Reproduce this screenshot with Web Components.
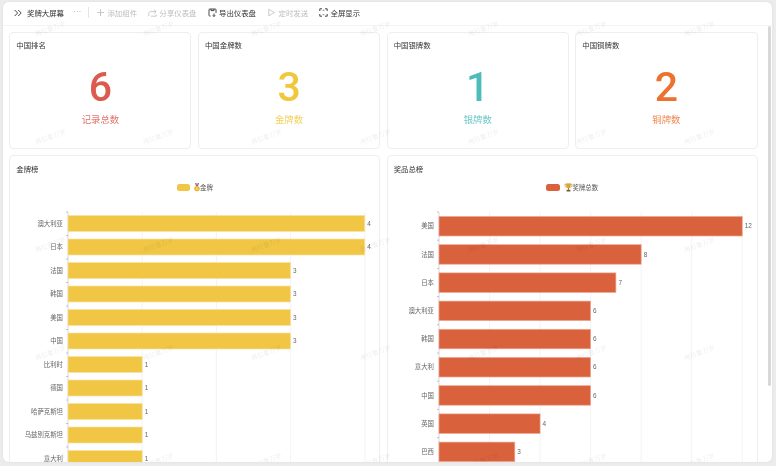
<!DOCTYPE html>
<html lang="zh">
<head>
<meta charset="utf-8">
<title>奖牌大屏幕</title>
<style>
    html, body { margin: 0; height: 100%; overflow: hidden; }
    body {
        background: #ececec;
        font-family: "Liberation Sans", "Noto Sans CJK SC", sans-serif;
        color: #333;
    }
</style>
</head>
<body>
<medal-board>
    <medal-toolbar slot="toolbar">
        <span slot="title">奖牌大屏幕</span>
        <tool-item disabled>
            <svg slot="icon" width="9" height="9" viewBox="0 0 9 9" fill="none" stroke="currentColor"><path d="M4.5 1v7M1 4.5h7" stroke-width=".8"/></svg>
            添加组件
        </tool-item>
        <tool-item disabled>
            <svg slot="icon" width="9" height="9" viewBox="0 0 9 9" fill="none" stroke="currentColor" stroke-width=".8"><path d="M.8 8.2V5.6c0-1.2.9-2 2-2H8M6 1.6l2.1 2L6 5.600M8.200 6.400v1.800H3"/></svg>
            分享仪表盘
        </tool-item>
        <tool-item>
            <svg slot="icon" width="9" height="9" viewBox="0 0 9 9" fill="none" stroke="currentColor" stroke-width=".9"><path d="M2.500 8H1.700a.7.7 0 0 1-.7-.7V1.700A.7.7 0 0 1 1.700 1h5.600a.7.700 0 0 1 .7.7v3.300M3 1v1.600h3V1M6 5.500V8.500M4.800 7.300 6 8.500l1.200-1.200"/></svg>
            导出仪表盘
        </tool-item>
        <tool-item disabled>
            <svg slot="icon" width="9" height="9" viewBox="0 0 9 9" fill="none" stroke="currentColor" stroke-width=".8"><path d="M1.800 1.200v6.600l5.600-3.300z" stroke-linejoin="round"/></svg>
            定时发送
        </tool-item>
        <tool-item>
            <svg slot="icon" width="9" height="9" viewBox="0 0 9 9" fill="none" stroke="currentColor" stroke-width=".9"><path d="M.8 3V.8H3M6 .8h2.200V3M8.200 6v2.200H6M3 8.200H.8V6"/><path d="M3.600 2.300h1.800M3.600 6.700h1.800" stroke-width=".6"/></svg>
            全屏显示
        </tool-item>
    </medal-toolbar>

    <stat-card title="中国排名" value="6" label="记录总数" color="#dc5b50"></stat-card>
    <stat-card title="中国金牌数" value="3" label="金牌数" color="#f1c83c"></stat-card>
    <stat-card title="中国银牌数" value="1" label="银牌数" color="#4fbcbc"></stat-card>
    <stat-card title="中国铜牌数" value="2" label="铜牌数" color="#ec7230"></stat-card>

    <bar-chart title="金牌榜" legend="金牌" color="#f0c644" edge="#f8e3a2"
        axis="58" unit="74.2" band="23.5" bar-top="3.500" bar-height="16" grid="1,2,3,4"
        data="澳大利亚:4,日本:4,法国:3,韩国:3,美国:3,中国:3,比利时:1,德国:1,哈萨克斯坦:1,乌兹别克斯坦:1,意大利:1">
        <svg slot="icon" width="6" height="9" viewBox="0 0 6 9">
            <path d="M1 0h1.400l.8 3H2z" fill="#d9534a"/><path d="M5 0H3.600l-.8 3H4z" fill="#4a78c8"/>
            <circle cx="3" cy="5.600" r="2.700" fill="#eda92e"/><circle cx="3" cy="5.600" r="1.500" fill="#f8d264"/>
        </svg>
    </bar-chart>
    <bar-chart title="奖品总榜" legend="奖牌总数" color="#d9613c" edge="#eea58f"
        axis="51" unit="25.27" band="28.2" bar-top="4.500" bar-height="19.500" grid="2,4,6,8,10,12"
        data="美国:12,法国:8,日本:7,澳大利亚:6,韩国:6,意大利:6,中国:6,英国:4,巴西:3">
        <svg slot="icon" width="9" height="9" viewBox="0 0 9 9">
            <path d="M1 1.200h7v1.300c0 1-.8 1.700-1.800 1.700H2.800C1.800 4.200 1 3.500 1 2.500z" fill="none" stroke="#b98a2c" stroke-width=".7"/>
            <path d="M2.300.5h4.400v2.300c0 1.400-1 2.300-2.200 2.300s-2.200-.9-2.200-2.300z" fill="#d9a62e"/>
            <path d="M4 5h1v1.800H4z" fill="#a8791f"/><path d="M2.600 6.800h3.800v1.700H2.600z" fill="#7a5a24"/>
        </svg>
    </bar-chart>
</medal-board>

<script>
class MedalBoard extends HTMLElement {
    constructor() {
        super();
        this.attachShadow({mode: "open"});
        this.shadowRoot.innerHTML = `
            <style>
                :host {
                    display: block;
                    box-sizing: border-box;
                    height: 466px;
                    padding: 2px 4px 4px 3px;
                }
                .panel {
                    position: relative;
                    height: 100%;
                    display: flex;
                    flex-direction: column;
                    background: #fff;
                    border-radius: 6px;
                    overflow: hidden;
                    box-shadow: 0 0 3px rgba(0, 0, 0, .06);
                    filter: blur(.4px);
                }
                .content {
                    flex: 1;
                    min-height: 0;
                    overflow: hidden;
                    display: grid;
                    grid-template-columns: repeat(4, 1fr);
                    grid-template-rows: 117px 400px;
                    gap: 6.5px;
                    padding: 5.700px 14.500px 0 6.300px;
                }
                .scrollbar {
                    position: absolute;
                    top: 24px;
                    right: 1px;
                    width: 3.5px;
                    height: 360px;
                    background: #d8d8d8;
                    border-radius: 2px;
                }
            </style>
            <div class="panel">
                <slot name="toolbar"></slot>
                <div class="content"><slot></slot></div>
                <div class="scrollbar"></div>
                <water-mark text="海拉鲁万岁"></water-mark>
            </div>
        `;
    }
}

class MedalToolbar extends HTMLElement {
    constructor() {
        super();
        this.attachShadow({mode: "open"});
        this.shadowRoot.innerHTML = `
            <style>
                :host {
                    display: flex;
                    align-items: center;
                    flex: none;
                    box-sizing: border-box;
                    height: 24px;
                    padding: 0 0 1.500px 11px;
                    border-bottom: 1px solid #f4f4f4;
                    font-size: 7.400px;
                    color: #333;
                }
                .title { margin-left: 5px; }
                .more {
                    margin-left: 9px;
                    width: 9px;
                    text-align: center;
                    color: #aaa;
                    letter-spacing: .3px;
                    line-height: 6px;
                    height: 8px;
                }
                .divider {
                    margin: 0 7px 0 6px;
                    width: 1px;
                    height: 11px;
                    background: #e4e4e4;
                }
                .tools { display: flex; gap: 11px; }
            </style>
            <svg width="8" height="8" viewBox="0 0 8 8" fill="none" stroke="#333" stroke-width=".9"><path d="M.7 1l3 3-3 3M4.200 1l3 3-3 3"/></svg>
            <span class="title"><slot name="title"></slot></span>
            <span class="more">···</span>
            <span class="divider"></span>
            <div class="tools"><slot></slot></div>
        `;
    }
}

class ToolItem extends HTMLElement {
    constructor() {
        super();
        this.attachShadow({mode: "open"});
        this.shadowRoot.innerHTML = `
            <style>
                :host {
                    display: inline-flex;
                    align-items: center;
                    gap: 2.500px;
                    color: #333;
                    white-space: nowrap;
                }
                :host([disabled]) { color: #bdbdbd; }
                ::slotted(svg) { flex: none; }
            </style>
            <slot name="icon"></slot><slot></slot>
        `;
    }
}

class StatCard extends HTMLElement {
    constructor() {
        super();
        this.attachShadow({mode: "open"});
        this.shadowRoot.innerHTML = `
            <style>
                :host {
                    display: flex;
                    flex-direction: column;
                    align-items: stretch;
                    box-sizing: border-box;
                    min-width: 0;
                    border: 1px solid #eeeeee;
                    border-radius: 4px;
                    background: #fff;
                    padding: 7px 6px 0;
                }
                .title { font-size: 7.400px; line-height: 11px; color: #333; }
                .value {
                    margin-top: 13px;
                    font-family: Roboto, "Liberation Sans", sans-serif;
                    font-size: 41px;
                    line-height: 46px;
                    font-weight: 500;
                    text-align: center;
                }
                .label {
                    margin-top: 3.500px;
                    font-size: 9.400px;
                    line-height: 14px;
                    text-align: center;
                    opacity: .85;
                }
            </style>
            <div class="title"></div>
            <div class="value"></div>
            <div class="label"></div>
        `;
    }

    connectedCallback() {
        const root = this.shadowRoot;
        const color = this.getAttribute("color");
        root.querySelector(".title").textContent = this.getAttribute("title");
        root.querySelector(".value").textContent = this.getAttribute("value");
        root.querySelector(".value").style.color = color;
        root.querySelector(".label").textContent = this.getAttribute("label");
        root.querySelector(".label").style.color = color;
    }
}

class BarChart extends HTMLElement {
    constructor() {
        super();
        this.attachShadow({mode: "open"});
        this.shadowRoot.innerHTML = `
            <style>
                :host {
                    grid-column: span 2;
                    display: block;
                    box-sizing: border-box;
                    min-width: 0;
                    border: 1px solid #eeeeee;
                    border-radius: 4px;
                    background: #fff;
                }
                .title {
                    padding: 7.500px 6px 0;
                    font-size: 7.400px;
                    line-height: 11px;
                    color: #333;
                }
                .legend {
                    margin-top: 8px;
                    display: flex;
                    justify-content: center;
                    align-items: center;
                    height: 10px;
                    font-size: 6.400px;
                    color: #555;
                }
                .swatch {
                    width: 13.500px;
                    height: 7.500px;
                    border-radius: 2.500px;
                    margin-right: 4px;
                }
                .name { margin-bottom: 1px; }
                ::slotted(svg) { flex: none; }
                svg.plot { display: block; margin-top: 19px; overflow: visible; }
                text { font-family: "Liberation Sans", "Noto Sans CJK SC", sans-serif; font-size: 6.400px; fill: #666; }
            </style>
            <div class="title"></div>
            <div class="legend"><span class="swatch"></span><slot name="icon"></slot><span class="name"></span></div>
            <svg class="plot" width="370" height="340"></svg>
        `;
    }

    connectedCallback() {
        const root = this.shadowRoot;
        const color = this.getAttribute("color");
        root.querySelector(".title").textContent = this.getAttribute("title");
        root.querySelector(".name").textContent = this.getAttribute("legend");
        root.querySelector(".swatch").style.background = color;
        this.draw(color);
    }

    draw(color) {
        const axis = +this.getAttribute("axis");
        const unit = +this.getAttribute("unit");
        const band = +this.getAttribute("band");
        const barTop = +this.getAttribute("bar-top");
        const barHeight = +this.getAttribute("bar-height");
        const edge = this.getAttribute("edge");
        const rows = this.getAttribute("data").split(",").map(d => d.split(":"));
        let out = "";

        this.getAttribute("grid").split(",").forEach(g => {
            const x = axis + g * unit;
            out += `<line x1="${x}" x2="${x}" y1="0" y2="340" stroke="#eef0f5" stroke-width=".8"/>`;
        });
        out += `<line x1="${axis}" x2="${axis}" y1="0" y2="340" stroke="#c4c8d2" stroke-width=".7"/>`;

        rows.forEach((row, i) => {
            const y = i * band;
            const w = row[1] * unit;
            out += `<line x1="${axis - 2}" x2="${axis}" y1="${y}" y2="${y}" stroke="#a8acb8" stroke-width=".7"/>`;
            out += `<rect x="${axis}" y="${y + barTop}" width="${w}" height="${barHeight}" fill="${color}" stroke="${edge}" stroke-width=".7"/>`;
            out += `<text x="${axis - 5}" y="${y + band / 2 + 2.200}" text-anchor="end">${row[0]}</text>`;
            out += `<text x="${axis + w + 2.500}" y="${y + band / 2 + 2.200}">${row[1]}</text>`;
        });
        this.shadowRoot.querySelector("svg.plot").innerHTML = out;
    }
}

class WaterMark extends HTMLElement {
    constructor() {
        super();
        this.attachShadow({mode: "open"});
        this.shadowRoot.innerHTML = `
            <style>
                :host {
                    position: absolute;
                    inset: 0;
                    overflow: hidden;
                    pointer-events: none;
                }
                .sheet {
                    display: grid;
                    grid-template-columns: repeat(7, 108.200px);
                    grid-auto-rows: 108px;
                    margin: -28px 0 0 -7px;
                }
                span {
                    display: flex;
                    align-items: center;
                    justify-content: center;
                    font-size: 6.500px;
                    color: rgba(0, 0, 0, .07);
                    transform: rotate(-20deg);
                    white-space: nowrap;
                }
            </style>
            <div class="sheet"></div>
        `;
    }

    connectedCallback() {
        const text = this.getAttribute("text");
        this.shadowRoot.querySelector(".sheet").innerHTML = `<span>${text}</span>`.repeat(35);
    }
}

window.customElements.define("water-mark", WaterMark);
window.customElements.define("tool-item", ToolItem);
window.customElements.define("medal-toolbar", MedalToolbar);
window.customElements.define("stat-card", StatCard);
window.customElements.define("bar-chart", BarChart);
window.customElements.define("medal-board", MedalBoard);
</script>
</body>
</html>
